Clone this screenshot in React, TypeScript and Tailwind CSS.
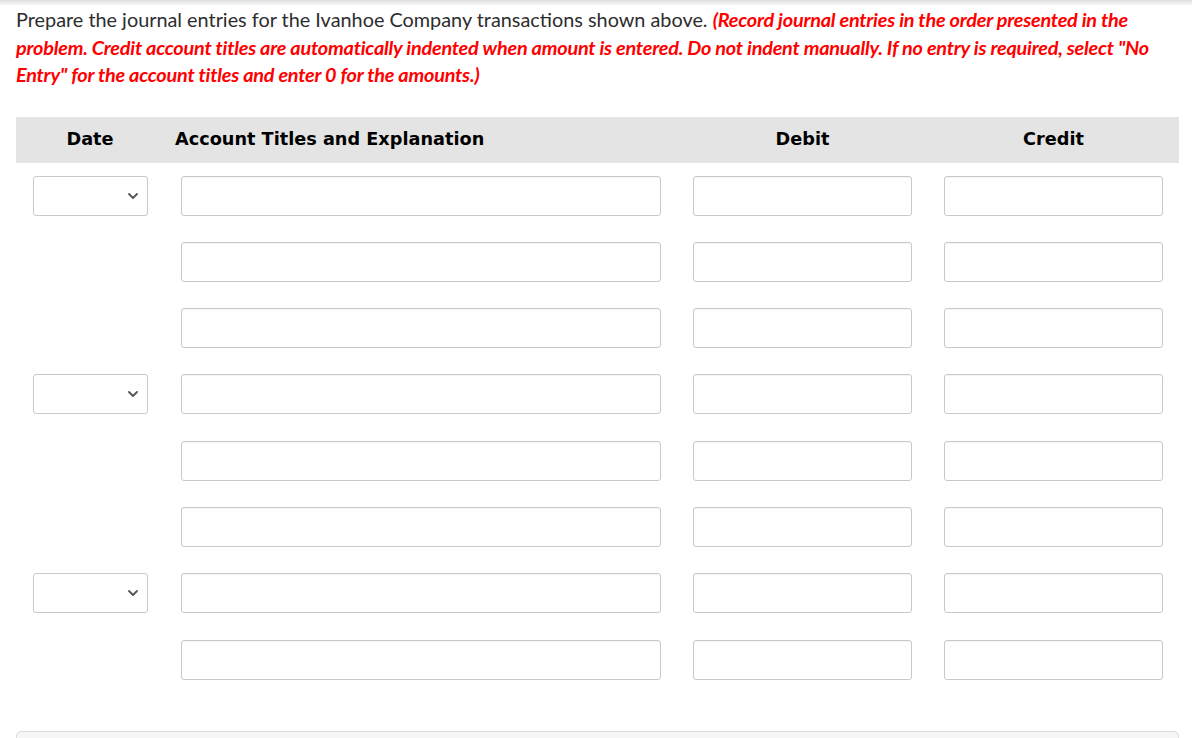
import { ChevronDown } from "lucide-react";

const ROWS = [true, false, false, true, false, false, true, false];

function Box({ className = "" }: { className?: string }) {
  return (
    <div
      className={`h-[40px] rounded-[3px] border border-[#c9c9c9] bg-white shadow-[inset_0_1px_1px_rgba(0,0,0,0.04)] ${className}`}
    />
  );
}

export default function App() {
  return (
    <div className="min-h-[738px] bg-white font-['Lato','Noto_Sans',sans-serif] text-[#2d2d2d]">
      <div className="h-[6px] bg-gradient-to-b from-[#dcdcdc] to-white" />

      <p className="px-4 text-[19.85px] leading-[27.5px]">
        Prepare the journal entries for the Ivanhoe Company transactions shown above.{" "}
        <span className="font-bold italic tracking-[-0.22px] text-[#ff0000]">
          (Record journal entries in the order presented in the problem. Credit account titles are
          automatically indented when amount is entered. Do not indent manually. If no entry is
          required, select "No Entry" for the account titles and enter 0 for the amounts.)
        </span>
      </p>

      <div className="mx-4 mt-[28px] w-[1163px]">
        {/* header */}
        <div className="flex h-[46px] items-center bg-[#e4e4e4] font-['DejaVu_Sans',sans-serif] text-[17.7px] font-bold text-black">
          <div className="w-[148px] text-center">Date</div>
          <div className="w-[513px] pl-[11px]">Account Titles and Explanation</div>
          <div className="w-[251px] text-center">Debit</div>
          <div className="w-[251px] text-center">Credit</div>
        </div>

        {/* rows */}
        <div>
          {ROWS.map((hasDate, i) => (
            <div key={i} className="flex h-[66.3px] items-start pt-[13px]">
              <div className="w-[148px] pl-[17px] pr-[16px]">
                {hasDate && (
                  <div className="flex h-[40px] items-center justify-end rounded-[3px] border border-[#c9c9c9] bg-white pr-[6px]">
                    <ChevronDown size={16} strokeWidth={2.75} className="text-[#555]" />
                  </div>
                )}
              </div>
              <div className="w-[513px] pl-[17px] pr-[16px]">
                <Box />
              </div>
              <div className="w-[251px] pl-[16px] pr-[16px]">
                <Box />
              </div>
              <div className="w-[251px] pl-[16px] pr-[16px]">
                <Box />
              </div>
            </div>
          ))}
        </div>

        <div className="mt-[38px] h-[20px] rounded-t-[5px] border border-[#dedede] bg-[#f6f6f6]" />
      </div>
    </div>
  );
}
